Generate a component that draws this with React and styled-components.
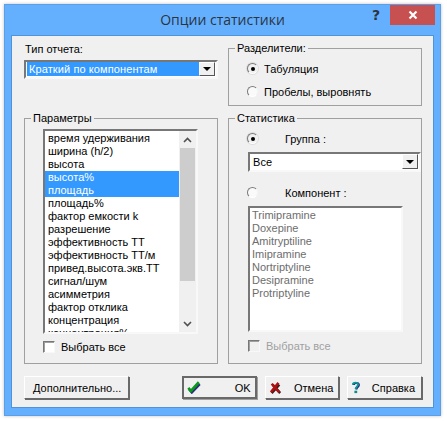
import React from 'react';
import styled, { createGlobalStyle } from 'styled-components';

const GlobalStyle = createGlobalStyle`
  html, body { margin: 0; padding: 0; background: #fff; }
  body { font-family: "Liberation Sans", Arial, sans-serif; font-size: 11px; color: #000; }
  #root { padding: 4px 6px 5px 4px; width: 447px; height: 421px; box-sizing: border-box; }
`;

const Window = styled.div`
  width: 437px;
  height: 412px;
  box-sizing: border-box;
  display: flex;
  flex-direction: column;
  background: #64b0ff;
  border: 1px solid #5b9fe6;
  box-shadow: 0 0 3px rgba(0, 0, 0, 0.25);
`;

const TitleBar = styled.div`
  flex: 0 0 30px;
  display: grid;
  grid-template-columns: 1fr auto 1fr;
`;

const Title = styled.div`
  grid-column: 2;
  font-family: "Open Sans", sans-serif;
  font-size: 14px;
  line-height: 30px;
  color: #2b3540;
`;

const Controls = styled.div`
  grid-column: 3;
  justify-self: end;
  display: flex;
  align-items: flex-start;
  margin-right: 5px;
`;

const HelpButton = styled.div`
  width: 24px;
  margin-right: 2px;
  text-align: center;
  font-family: "DejaVu Sans", sans-serif;
  font-weight: 700;
  font-size: 14px;
  line-height: 20px;
  color: #2b3540;
`;

const CloseButton = styled.div`
  width: 45px;
  height: 20px;
  background: #c75050;
  display: flex;
  align-items: center;
  justify-content: center;
`;

const Client = styled.div`
  flex: 1;
  margin: 0 6px 7px;
  border: 1px solid #4f93d8;
  background: #f0f0f0;
  padding: 6px 11px 0 12px;
  display: flex;
  flex-direction: column;
`;

const Columns = styled.div`
  display: grid;
  grid-template-columns: 194px 194px;
  grid-template-rows: 64px 252px;
  column-gap: 10px;
  row-gap: 6px;
`;

const Field = styled.div`
  display: flex;
  flex-direction: column;
`;

const Label = styled.div`
  line-height: 13px;
  margin: 1px 0 4px 1px;
`;

const Group = styled.fieldset`
  margin: 0;
  min-width: 0;
  box-sizing: border-box;
  border: 1px solid #a0a0a0;
  padding: 0;
`;

const Legend = styled.legend`
  margin-left: 6px;
  padding: 0 2px;
  line-height: 13px;
`;

const Sunken = styled.div`
  box-sizing: border-box;
  border-style: solid;
  border-width: 2px;
  border-color: #777 #f8f8f8 #f8f8f8 #777;
  background: #fff;
`;

const Select = styled(Sunken)`
  height: ${(p) => p.$height}px;
  margin-left: ${(p) => p.$left || 0}px;
  display: flex;
  padding: 0 1px 1px 1px;
`;

const SelectValue = styled.div`
  flex: 1;
  padding-left: 2px;
  display: flex;
  align-items: center;
  letter-spacing: 0.1px;
  background: ${(p) => (p.$selected ? '#3399ff' : '#fff')};
  color: ${(p) => (p.$selected ? '#fff' : '#000')};
`;

const SelectArrow = styled.div`
  width: 16px;
  box-sizing: border-box;
  background: #f0f0f0;
  border: 1px solid;
  border-color: #fff #555 #555 #fff;
  display: flex;
  align-items: center;
  justify-content: center;
  &::after {
    content: '';
    border-style: solid;
    border-width: 4px 4px 0;
    border-color: #000 transparent transparent;
  }
`;

const RadioRow = styled.div`
  display: flex;
  align-items: center;
  height: 13px;
  margin: ${(p) => p.$margin || '0'};
  padding-left: 18px;
  gap: ${(p) => p.$gap}px;
`;

const Radio = styled.span`
  box-sizing: border-box;
  flex: 0 0 11px;
  width: 11px;
  height: 11px;
  border-radius: 50%;
  border: 1px solid;
  border-color: #7a7a7a #f4f4f4 #fff #7a7a7a;
  background: ${(p) => (p.$checked ? '#f0f0f0' : '#fafafa')};
  box-shadow: ${(p) => (p.$checked ? '0 0 0 1px #dcdcdc' : 'none')};
  display: flex;
  align-items: center;
  justify-content: center;
  &::after {
    content: '';
    width: 4px;
    height: 4px;
    border-radius: 50%;
    background: ${(p) => (p.$checked ? '#000' : 'transparent')};
  }
`;

const ParamList = styled(Sunken)`
  width: 155px;
  height: 205px;
  margin: 4px 0 0 18px;
  display: flex;
  overflow: hidden;
`;

const Rows = styled.div`
  flex: 1;
  min-width: 0;
  padding-top: 1px;
  overflow: hidden;
`;

const Row = styled.div`
  height: 13px;
  line-height: 13px;
  padding-left: 3px;
  white-space: nowrap;
  background: ${(p) => (p.$selected ? '#3399ff' : 'transparent')};
  color: ${(p) => (p.$selected ? '#fff' : '#000')};
`;

const Scrollbar = styled.div`
  flex: 0 0 17px;
  background: #f0f0f0;
  display: flex;
  flex-direction: column;
  align-items: center;
`;

const ScrollEnd = styled.div`
  flex: 0 0 17px;
  display: flex;
  align-items: center;
  justify-content: center;
`;

const ScrollThumb = styled.div`
  width: 15px;
  height: 133px;
  background: #cdcdcd;
`;

const ScrollSpace = styled.div`
  flex: 1;
`;

const CheckRow = styled.div`
  display: flex;
  align-items: center;
  gap: 6px;
  height: 13px;
  margin: ${(p) => p.$margin};
  color: ${(p) => (p.$disabled ? '#a0a0a0' : '#000')};
`;

const Checkbox = styled.span`
  box-sizing: border-box;
  width: 12px;
  height: 12px;
  border: 1px solid;
  border-color: #777 #f8f8f8 #f8f8f8 #777;
  box-shadow: inset 1px 1px 0 #a0a0a0;
  background: ${(p) => (p.$disabled ? '#f0f0f0' : '#fff')};
`;

const CompList = styled(Sunken)`
  height: 126px;
  margin: 7px 0 0 19px;
  width: 155px;
  padding: 1px 0 0 2px;
  color: #6d6d6d;
`;

const CompRow = styled.div`
  height: 13px;
  line-height: 13px;
`;

const Buttons = styled.div`
  display: flex;
  margin-top: 12px;
  gap: 8px;
`;

const Button = styled.div`
  box-sizing: border-box;
  width: ${(p) => p.$width}px;
  height: 23px;
  margin-right: ${(p) => p.$after || 0}px;
  display: flex;
  align-items: center;
  justify-content: space-between;
  padding: ${(p) => p.$pad || '0 6px'};
  background: #f0f0f0;
  border: 1px solid;
  border-color: #fff #696969 #696969 #fff;
  box-shadow: 1px 1px 0 #696969;
  ${(p) => p.$default && 'border: 2px solid #696969; box-shadow: 1px 1px 0 #a0a0a0;'}
`;

const params = [
  { name: 'время удерживания' },
  { name: 'ширина (h/2)' },
  { name: 'высота' },
  { name: 'высота%', selected: true },
  { name: 'площадь', selected: true },
  { name: 'площадь%' },
  { name: 'фактор емкости k' },
  { name: 'разрешение' },
  { name: 'эффективность ТТ' },
  { name: 'эффективность ТТ/м' },
  { name: 'привед.высота.экв.ТТ' },
  { name: 'сигнал/шум' },
  { name: 'асимметрия' },
  { name: 'фактор отклика' },
  { name: 'концентрация' },
  { name: 'концентрация%' },
];

const components = [
  'Trimipramine',
  'Doxepine',
  'Amitryptiline',
  'Imipramine',
  'Nortriptyline',
  'Desipramine',
  'Protriptyline',
];

const CloseIcon = () => (
  <svg width="10" height="10" viewBox="0 0 10 10">
    <path d="M1.5 1.5 L8.5 8.5 M8.5 1.5 L1.5 8.5" stroke="#fff" strokeWidth="2.2" fill="none" />
  </svg>
);

const Chevron = ({ up }) => (
  <svg width="9" height="6" viewBox="0 0 9 6">
    <path d={up ? 'M1 5 L4.5 1.5 L8 5' : 'M1 1 L4.5 4.5 L8 1'} stroke="#505050" strokeWidth="1.6" fill="none" />
  </svg>
);

const CheckIcon = () => (
  <svg width="14" height="13" viewBox="0 0 16 14">
    <path d="M2.5 9 L5.5 12.5 L14.5 3" stroke="#2a2a80" strokeWidth="3" fill="none" />
    <path d="M1.5 7.5 L4.5 11 L13.5 1" stroke="#0a9a1a" strokeWidth="3" fill="none" />
  </svg>
);

const CrossIcon = () => (
  <svg width="11" height="12" viewBox="0 0 13 14">
    <path d="M3 3 L12 13 M11 3 L2 13" stroke="#3a2020" strokeWidth="3" fill="none" />
    <path d="M2 2 L11 12 M10 1 L1 12" stroke="#b01010" strokeWidth="3" fill="none" />
  </svg>
);

const HelpIcon = () => (
  <svg width="8" height="13" viewBox="0 0 10 15">
    <path d="M2 4.5 C2 1 8.5 1 8.5 4.5 C8.5 7 5.5 7 5.5 10" stroke="#14146e" strokeWidth="2.6" fill="none" />
    <path d="M1 4 C1 0.5 7.5 0.5 7.5 4 C7.5 6.5 4.5 6.5 4.5 9.5" stroke="#0e9a9a" strokeWidth="2.4" fill="none" />
    <rect x="3" y="11.5" width="3.5" height="3" fill="#0e8a8a" />
  </svg>
);

const App = () => (
  <>
    <GlobalStyle />
    <Window>
      <TitleBar>
        <Title>Опции статистики</Title>
        <Controls>
          <HelpButton>?</HelpButton>
          <CloseButton><CloseIcon /></CloseButton>
        </Controls>
      </TitleBar>
      <Client>
        <Columns>
          <Field>
            <Label>Тип отчета:</Label>
            <Select $height={19}>
              <SelectValue $selected>Краткий по компонентам</SelectValue>
              <SelectArrow />
            </Select>
          </Field>
          <Group>
            <Legend>Разделители:</Legend>
            <RadioRow $gap={6} $margin="7px 0 0">
              <Radio $checked />
              Табуляция
            </RadioRow>
            <RadioRow $gap={6} $margin="10px 0 0">
              <Radio />
              Пробелы, выровнять
            </RadioRow>
          </Group>
          <Group>
            <Legend>Параметры</Legend>
            <ParamList>
              <Rows>
                {params.map((p) => (
                  <Row key={p.name} $selected={p.selected}>{p.name}</Row>
                ))}
              </Rows>
              <Scrollbar>
                <ScrollEnd><Chevron up /></ScrollEnd>
                <ScrollThumb />
                <ScrollSpace />
                <ScrollEnd><Chevron /></ScrollEnd>
              </Scrollbar>
            </ParamList>
            <CheckRow $margin="6px 0 0 18px">
              <Checkbox />
              Выбрать все
            </CheckRow>
          </Group>
          <Group>
            <Legend>Статистика</Legend>
            <RadioRow $gap={27} $margin="7px 0 7px">
              <Radio $checked />
              Группа :
            </RadioRow>
            <Select $height={20} $left={19}>
              <SelectValue>Все</SelectValue>
              <SelectArrow />
            </Select>
            <RadioRow $gap={27} $margin="14px 0 0">
              <Radio />
              Компонент :
            </RadioRow>
            <CompList>
              {components.map((c) => (
                <CompRow key={c}>{c}</CompRow>
              ))}
            </CompList>
            <CheckRow $disabled $margin="7px 0 0 19px">
              <Checkbox $disabled />
              Выбрать все
            </CheckRow>
          </Group>
        </Columns>
        <Buttons>
          <Button $width={105} $after={45} $pad="0 8px">Дополнительно...</Button>
          <Button $width={75} $default $pad="0 4px 0 3px"><CheckIcon />OK</Button>
          <Button $width={75} $pad="0 5px 0 4px"><CrossIcon />Отмена</Button>
          <Button $width={75} $pad="0 6px 0 4px"><HelpIcon />Справка</Button>
        </Buttons>
      </Client>
    </Window>
  </>
);

export default App;
